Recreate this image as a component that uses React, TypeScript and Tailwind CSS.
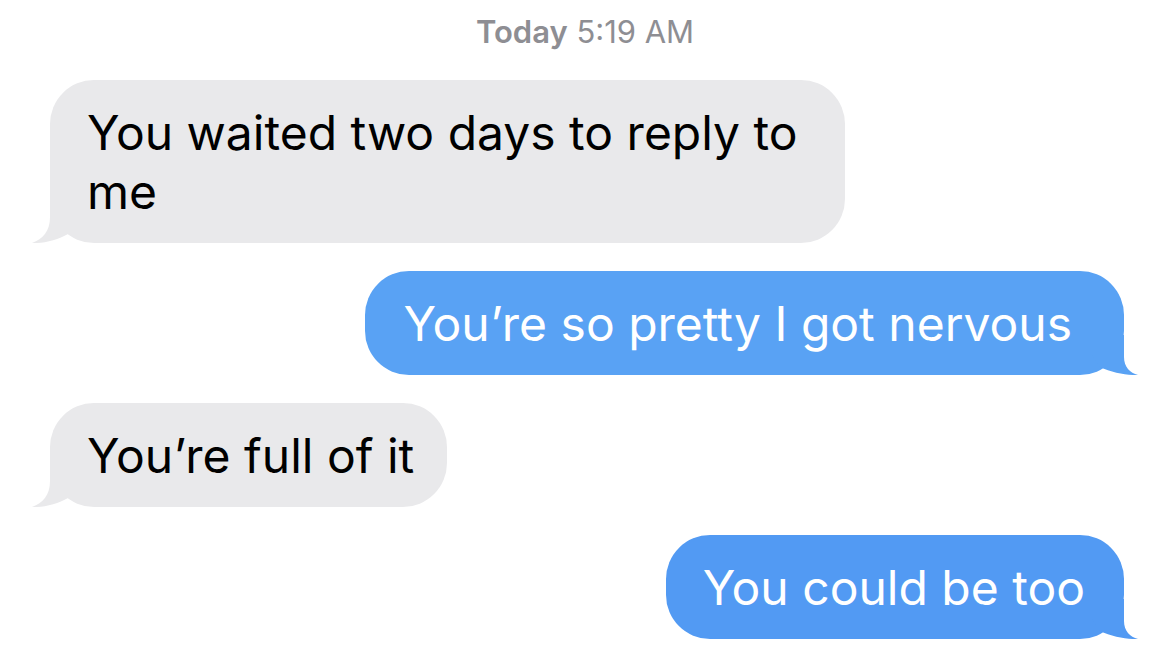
import type { ReactNode } from "react";

const FONT = "font-['Inter','Noto_Sans',sans-serif]";

/** Left-hand tail for incoming (gray) bubbles. */
function LeftTail() {
  return (
    <svg
      className="absolute bottom-0 left-[-18px] h-[44px] w-[50px] fill-[#e9e9eb]"
      viewBox="0 0 50 44"
      aria-hidden
    >
      <path d="M18 0 L18 18 C18 32 11 40 0 44 C12 44.5 26 41 36 35 L50 20 L50 0 Z" />
    </svg>
  );
}

/** Right-hand tail for outgoing (blue) bubbles; colour comes from the bubble. */
function RightTail({ className }: { className: string }) {
  return (
    <svg
      className={`absolute right-[-14px] bottom-0 h-[40px] w-[46px] ${className}`}
      viewBox="0 0 46 40"
      aria-hidden
    >
      <path d="M32 0 L32 22 C32 32 38 38 46 40 C36 40.5 20 38 8 32 L0 20 L0 0 Z" />
    </svg>
  );
}

function Incoming({ children }: { children: ReactNode }) {
  return (
    <div className="flex justify-start pl-[50px]">
      <div className="relative max-w-[795px] rounded-[44px] bg-[#e9e9eb] py-[22.5px] pr-[33px] pl-[37px] text-[48px] leading-[59px] text-black">
        {children}
        <LeftTail />
      </div>
    </div>
  );
}

function Outgoing({
  children,
  tone,
}: {
  children: ReactNode;
  tone: "light" | "deep";
}) {
  // the upper blue bubble sits a touch lighter and carries extra room on the tail side
  const look =
    tone === "light" ? "bg-[#59a2f4] pl-[39px] pr-[52px]" : "bg-[#529af3] pl-[37px] pr-[39px]";
  const fill = tone === "light" ? "fill-[#59a2f4]" : "fill-[#529af3]";
  return (
    <div className="flex justify-end pr-[46px]">
      <div
        className={`relative max-w-[795px] rounded-[44px] py-[22.5px] text-[48px] leading-[59px] text-white ${look}`}
      >
        {children}
        <RightTail className={fill} />
      </div>
    </div>
  );
}

export default function App() {
  return (
    <div className={`h-[659px] w-[1170px] overflow-hidden bg-white pt-[14px] ${FONT}`}>
      <p className="text-center text-[31px] leading-[36px] text-[#8e8e93]">
        <span className="font-semibold">Today</span> 5:19 AM
      </p>

      <div className="mt-[30px] flex flex-col gap-[28px]">
        <Incoming>You waited two days to reply to me</Incoming>
        <Outgoing tone="light">You’re so pretty I got nervous</Outgoing>
        <Incoming>You’re full of it</Incoming>
        <Outgoing tone="deep">You could be too</Outgoing>
      </div>
    </div>
  );
}
